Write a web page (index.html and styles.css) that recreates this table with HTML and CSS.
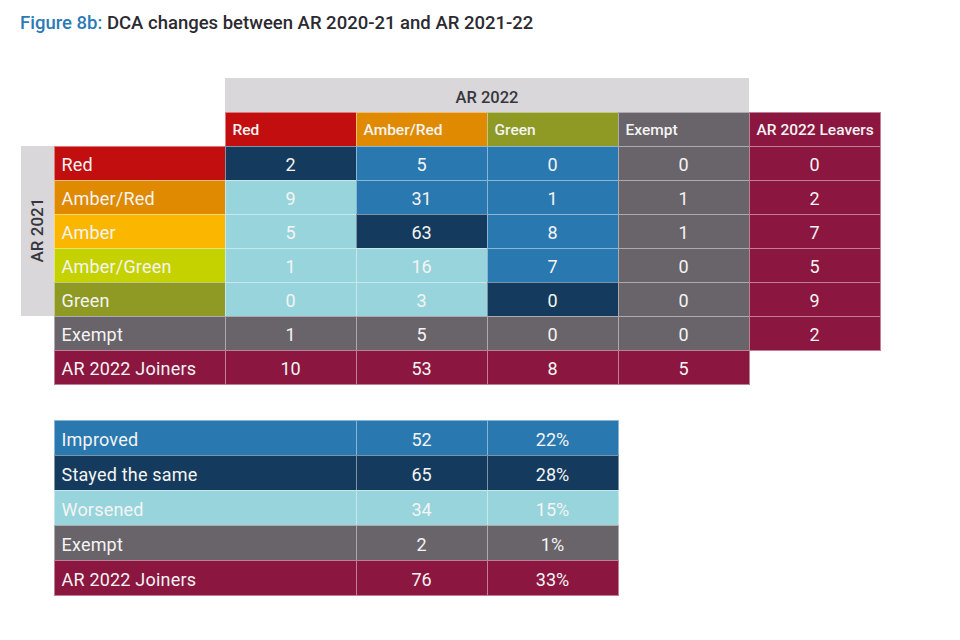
FILE: index.html
```html
<!DOCTYPE html>
<html lang="en">
<head>
<meta charset="utf-8">
<title>Figure 8b</title>
<link rel="stylesheet" href="styles.css">
</head>
<body>
<div class="page">
  <h1 class="title"><span class="fig">Figure 8b:</span> DCA changes between AR 2020-21 and AR 2021-22</h1>

  <div class="matrix">
    <div class="blank span2"></div>
    <div class="band-top">AR 2022</div>
    <div class="blank"></div>

    <div class="blank span2"></div>
    <div class="head red">Red</div>
    <div class="head amber-red">Amber/Red</div>
    <div class="head green">Green</div>
    <div class="head exempt">Exempt</div>
    <div class="head leaver">AR 2022 Leavers</div>

    <div class="band-side"><span>AR 2021</span></div>
    <div class="label red">Red</div>
    <div class="cell navy">2</div>
    <div class="cell blue">5</div>
    <div class="cell blue">0</div>
    <div class="cell exempt">0</div>
    <div class="cell leaver">0</div>

    <div class="label amber-red">Amber/Red</div>
    <div class="cell cyan">9</div>
    <div class="cell blue">31</div>
    <div class="cell blue">1</div>
    <div class="cell exempt">1</div>
    <div class="cell leaver">2</div>

    <div class="label amber">Amber</div>
    <div class="cell cyan">5</div>
    <div class="cell navy">63</div>
    <div class="cell blue">8</div>
    <div class="cell exempt">1</div>
    <div class="cell leaver">7</div>

    <div class="label amber-green">Amber/Green</div>
    <div class="cell cyan">1</div>
    <div class="cell cyan">16</div>
    <div class="cell blue">7</div>
    <div class="cell exempt">0</div>
    <div class="cell leaver">5</div>

    <div class="label green">Green</div>
    <div class="cell cyan">0</div>
    <div class="cell cyan">3</div>
    <div class="cell navy">0</div>
    <div class="cell exempt">0</div>
    <div class="cell leaver">9</div>

    <div class="label exempt solo">Exempt</div>
    <div class="cell exempt">1</div>
    <div class="cell exempt">5</div>
    <div class="cell exempt">0</div>
    <div class="cell exempt">0</div>
    <div class="cell leaver">2</div>

    <div class="label leaver solo">AR 2022 Joiners</div>
    <div class="cell leaver">10</div>
    <div class="cell leaver">53</div>
    <div class="cell leaver">8</div>
    <div class="cell leaver">5</div>
  </div>

  <div class="summary">
    <div class="label blue">Improved</div>
    <div class="cell blue">52</div>
    <div class="cell blue">22%</div>

    <div class="label navy">Stayed the same</div>
    <div class="cell navy">65</div>
    <div class="cell navy">28%</div>

    <div class="label cyan">Worsened</div>
    <div class="cell cyan">34</div>
    <div class="cell cyan">15%</div>

    <div class="label exempt">Exempt</div>
    <div class="cell exempt">2</div>
    <div class="cell exempt">1%</div>

    <div class="label leaver">AR 2022 Joiners</div>
    <div class="cell leaver">76</div>
    <div class="cell leaver">33%</div>
  </div>
</div>
</body>
</html>
```

FILE: styles.css
```css
html, body {
  margin: 0;
  padding: 0;
  background: #ffffff;
}

body {
  font-family: Roboto, "Liberation Sans", sans-serif;
  color: #2b2a31;
}

.page {
  width: 960px;
  height: 640px;
  padding: 12px 0 0 20px;
  box-sizing: border-box;
}

.title {
  margin: 0;
  font-size: 18.5px;
  font-weight: 500;
  line-height: 22px;
  letter-spacing: 0;
  color: #2b2a31;
}

.title .fig {
  color: #2c7bb6;
}

.matrix {
  margin-top: 44px;
  margin-left: 1px;
  display: grid;
  grid-template-columns: 33px 171px 131px 131px 131px 131px 131px;
  grid-auto-rows: 34px;
}

.span2 {
  grid-column: span 2;
}

.band-top {
  grid-column: span 4;
  background: #d9d7da;
  display: flex;
  align-items: center;
  justify-content: center;
  font-size: 16.5px;
  font-weight: 500;
  color: #37363c;
  padding-top: 4px;
  box-sizing: border-box;
}

.band-side {
  grid-row: span 5;
  background: #d9d7da;
  display: flex;
  align-items: center;
  justify-content: center;
}

.band-side span {
  transform: rotate(-90deg);
  white-space: nowrap;
  font-size: 17px;
  font-weight: 500;
  color: #37363c;
  margin-bottom: 2px;
}

.solo {
  grid-column: 2;
}

.head,
.label,
.cell {
  display: flex;
  align-items: center;
  box-sizing: border-box;
  border: 1px solid rgba(255, 255, 255, 0.45);
  margin: -0.5px;
  color: #f4f4f4;
  white-space: nowrap;
}

.head {
  font-size: 15.5px;
  font-weight: 500;
  padding-left: 7px;
  padding-top: 2px;
}

.label {
  font-size: 18px;
  font-weight: 400;
  letter-spacing: 0.2px;
  padding-left: 7px;
  padding-top: 3px;
}

.cell {
  font-size: 18px;
  font-weight: 400;
  justify-content: center;
  padding-top: 3px;
}

.red { background: #c20e0f; }
.amber-red { background: #e08a02; }
.amber { background: #fbb700; }
.amber-green { background: #c6d200; }
.green { background: #8e9a24; }
.exempt { background: #69646a; }
.leaver { background: #8b163f; }
.navy { background: #143b5d; }
.blue { background: #2a78b0; }
.cyan { background: #98d4dc; }

.summary {
  margin-top: 36px;
  margin-left: 34px;
  display: grid;
  grid-template-columns: 302px 131px 131px;
  grid-auto-rows: 35px;
}
```
